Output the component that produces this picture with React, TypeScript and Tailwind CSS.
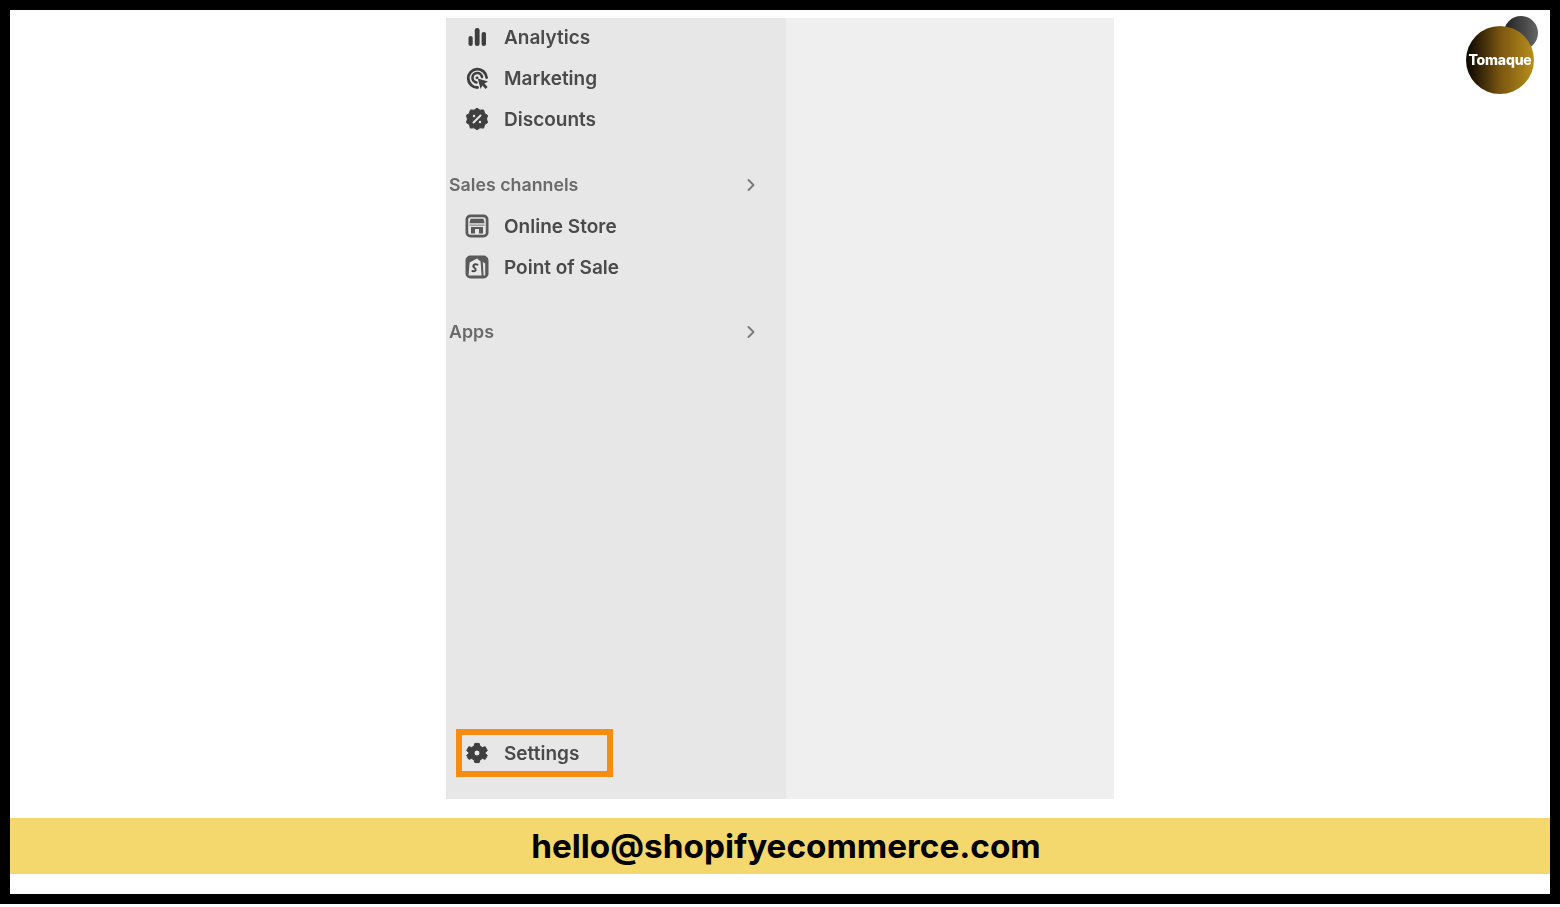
const font = "[font-family:Inter,'Liberation_Sans',sans-serif]";

function Bars() {
  return (
    <svg viewBox="0 0 24 24" className="w-[24px] h-[24px]" fill="#3f3f3f">
      <rect x="3.5" y="11" width="4.2" height="10" rx="2" />
      <rect x="9.8" y="3" width="4.8" height="18" rx="2.2" />
      <rect x="16.6" y="7" width="4.4" height="14" rx="2" />
    </svg>
  );
}

function Target() {
  return (
    <svg viewBox="0 0 24 24" className="w-[24px] h-[24px]" fill="none">
      <path d="M12.5 21.5A9.2 9.2 0 1 1 21.6 11.5" stroke="#3f3f3f" strokeWidth="2.8" strokeLinecap="round" />
      <path d="M11.5 16.5A4.8 4.8 0 1 1 17 11" stroke="#3f3f3f" strokeWidth="2.6" strokeLinecap="round" />
      <circle cx="12" cy="11.8" r="1.4" fill="#3f3f3f" />
      <path d="M12.8 12.6 L23 15.6 L19.4 17.6 L22.6 21 L20.6 23 L17.4 19.6 L15.6 23 Z" fill="#3f3f3f" />
    </svg>
  );
}

function Badge() {
  return (
    <svg viewBox="0 0 24 24" className="w-[24px] h-[24px]">
      <path
        d="M12 1.2 L15 3.2 L18.6 2.9 L19.6 6.4 L22.6 8.4 L21.5 12 L22.6 15.6 L19.6 17.6 L18.6 21.1 L15 20.8 L12 22.8 L9 20.8 L5.4 21.1 L4.4 17.6 L1.4 15.6 L2.5 12 L1.4 8.4 L4.4 6.4 L5.4 2.9 L9 3.2 Z"
        fill="#3f3f3f"
        stroke="#3f3f3f"
        strokeWidth="1"
        strokeLinejoin="round"
      />
      <path d="M8.5 15.5 L15.5 8.5" stroke="#e7e7e7" strokeWidth="1.9" strokeLinecap="round" />
      <circle cx="9" cy="9" r="1.2" fill="#e7e7e7" />
      <circle cx="15" cy="15" r="1.2" fill="#e7e7e7" />
    </svg>
  );
}

function Store() {
  return (
    <svg viewBox="0 0 24 24" className="w-[24px] h-[24px]">
      <rect x="0.5" y="0.5" width="23" height="23" rx="5" fill="#5a5a5a" />
      <rect x="3.2" y="3.2" width="17.6" height="17.6" rx="2.5" fill="#e7e7e7" />
      <path d="M5.5 4.8 H18.5 L19.6 9.2 H4.4 Z" fill="#5a5a5a" />
      <path d="M4.4 10.6 H19.6 V11.8 H4.4 Z" fill="#8a8a8a" />
      <path d="M6 13 H10 V19.5 H6 Z M14 13 H18 V19.5 H14 Z M10 13 H14 V15 H10 Z" fill="#5a5a5a" />
    </svg>
  );
}

function Pos() {
  return (
    <svg viewBox="0 0 24 24" className="w-[24px] h-[24px]">
      <rect x="0.5" y="0.5" width="23" height="23" rx="5" fill="#5a5a5a" />
      <path d="M4.6 7.5 L12 3.6 L15.6 6.6 L16.6 20.6 L3.6 20.6 Z" fill="#e7e7e7" />
      <path d="M17.8 7 L20.2 8.5 V20.4 H18.6 Z" fill="#e7e7e7" />
      <path d="M12.4 9.6 C8.8 8.4 7.2 11 9.4 12.8 C11.6 14.4 11 17 7.4 16" stroke="#4a4a4a" strokeWidth="2" fill="none" strokeLinecap="round" />
    </svg>
  );
}

function Gear() {
  return (
    <svg viewBox="0 0 24 24" className="w-[24px] h-[24px]">
      <path
        fillRule="evenodd"
        fill="#3f3f3f"
        d="M9.8 2.4 H14.2 L15 5.2 L17.4 6.5 L20.2 5.7 L22.3 9.5 L20.3 11.5 V12.5 L22.3 14.5 L20.2 18.3 L17.4 17.5 L15 18.8 L14.2 21.6 H9.8 L9 18.8 L6.6 17.5 L3.8 18.3 L1.7 14.5 L3.7 12.5 V11.5 L1.7 9.5 L3.8 5.7 L6.6 6.5 L9 5.2 Z M12 9 A3 3 0 1 0 12 15 A3 3 0 1 0 12 9 Z"
        stroke="#3f3f3f"
        strokeWidth="1"
        strokeLinejoin="round"
      />
    </svg>
  );
}

function Row({ icon, label }: { icon: React.ReactNode; label: string }) {
  return (
    <div className="h-[41px] flex items-center pl-[19px] shrink-0">
      <span className="w-[24px] h-[24px] shrink-0">{icon}</span>
      <span className="ml-[15px] pt-[2px] text-[19px] font-semibold text-[#4a4a4a]">{label}</span>
    </div>
  );
}

function Section({ label }: { label: string }) {
  return (
    <div className="h-[41px] flex items-center justify-between pl-[3px] pr-[29px] shrink-0">
      <span className="text-[17.8px] font-semibold text-[#6a6a6a]">{label}</span>
      <svg viewBox="0 0 12 16" className="w-[12px] h-[16px]" fill="none" stroke="#7a7a7a" strokeWidth="1.9" strokeLinecap="round" strokeLinejoin="round">
        <path d="M3.5 3 L8.5 8 L3.5 13" />
      </svg>
    </div>
  );
}

export default function App() {
  return (
    <div className={`relative w-[1560px] h-[907px] bg-white overflow-hidden ${font}`}>
      <div className="h-[904px] border-[10px] border-black bg-white flex flex-col">
        <div className="mt-[8px] ml-[436px] w-[668px] h-[781px] flex shrink-0 overflow-hidden">
          <nav className="w-[340px] bg-[#e7e7e7] flex flex-col">
            <div className="blur-[0.4px] flex flex-col grow">
              <div className="-mt-[1.5px] flex flex-col">
                <Row icon={<Bars />} label="Analytics" />
                <Row icon={<Target />} label="Marketing" />
                <Row icon={<Badge />} label="Discounts" />
              </div>
              <div className="mt-[25px] flex flex-col">
                <Section label="Sales channels" />
                <Row icon={<Store />} label="Online Store" />
                <Row icon={<Pos />} label="Point of Sale" />
              </div>
              <div className="mt-[24px]">
                <Section label="Apps" />
              </div>
              <div className="mt-auto mb-[22px] ml-[10px] w-[157px] h-[48px] border-[6px] border-[#f78c12] flex items-center pl-[3px]">
                <span className="w-[24px] h-[24px] shrink-0"><Gear /></span>
                <span className="ml-[15px] pt-[2px] text-[19px] font-semibold text-[#4a4a4a]">Settings</span>
              </div>
            </div>
          </nav>
          <div className="w-[328px] bg-[#efefef]" />
        </div>
        <div className="mt-[19px] h-[56px] bg-[#f4d86e] flex items-center justify-center shrink-0 pl-[12px] pt-[1px]">
          <span className="text-[33.3px] font-bold text-black">hello@shopifyecommerce.com</span>
        </div>
      </div>
      <div className="absolute left-[1504px] top-[16px] w-[34px] h-[34px] rounded-full bg-gradient-to-r from-[#222222] to-[#666666]" />
      <div className="absolute left-[1466px] top-[26px] w-[68px] h-[68px] rounded-full bg-gradient-to-r from-[#0b0702] via-[#7a5510] to-[#b8901c] flex items-center justify-center">
        <span className="-mt-[2px] text-[14px] font-extrabold text-white whitespace-nowrap tracking-[-0.2px] blur-[0.4px]">Tomaque</span>
      </div>
    </div>
  );
}
